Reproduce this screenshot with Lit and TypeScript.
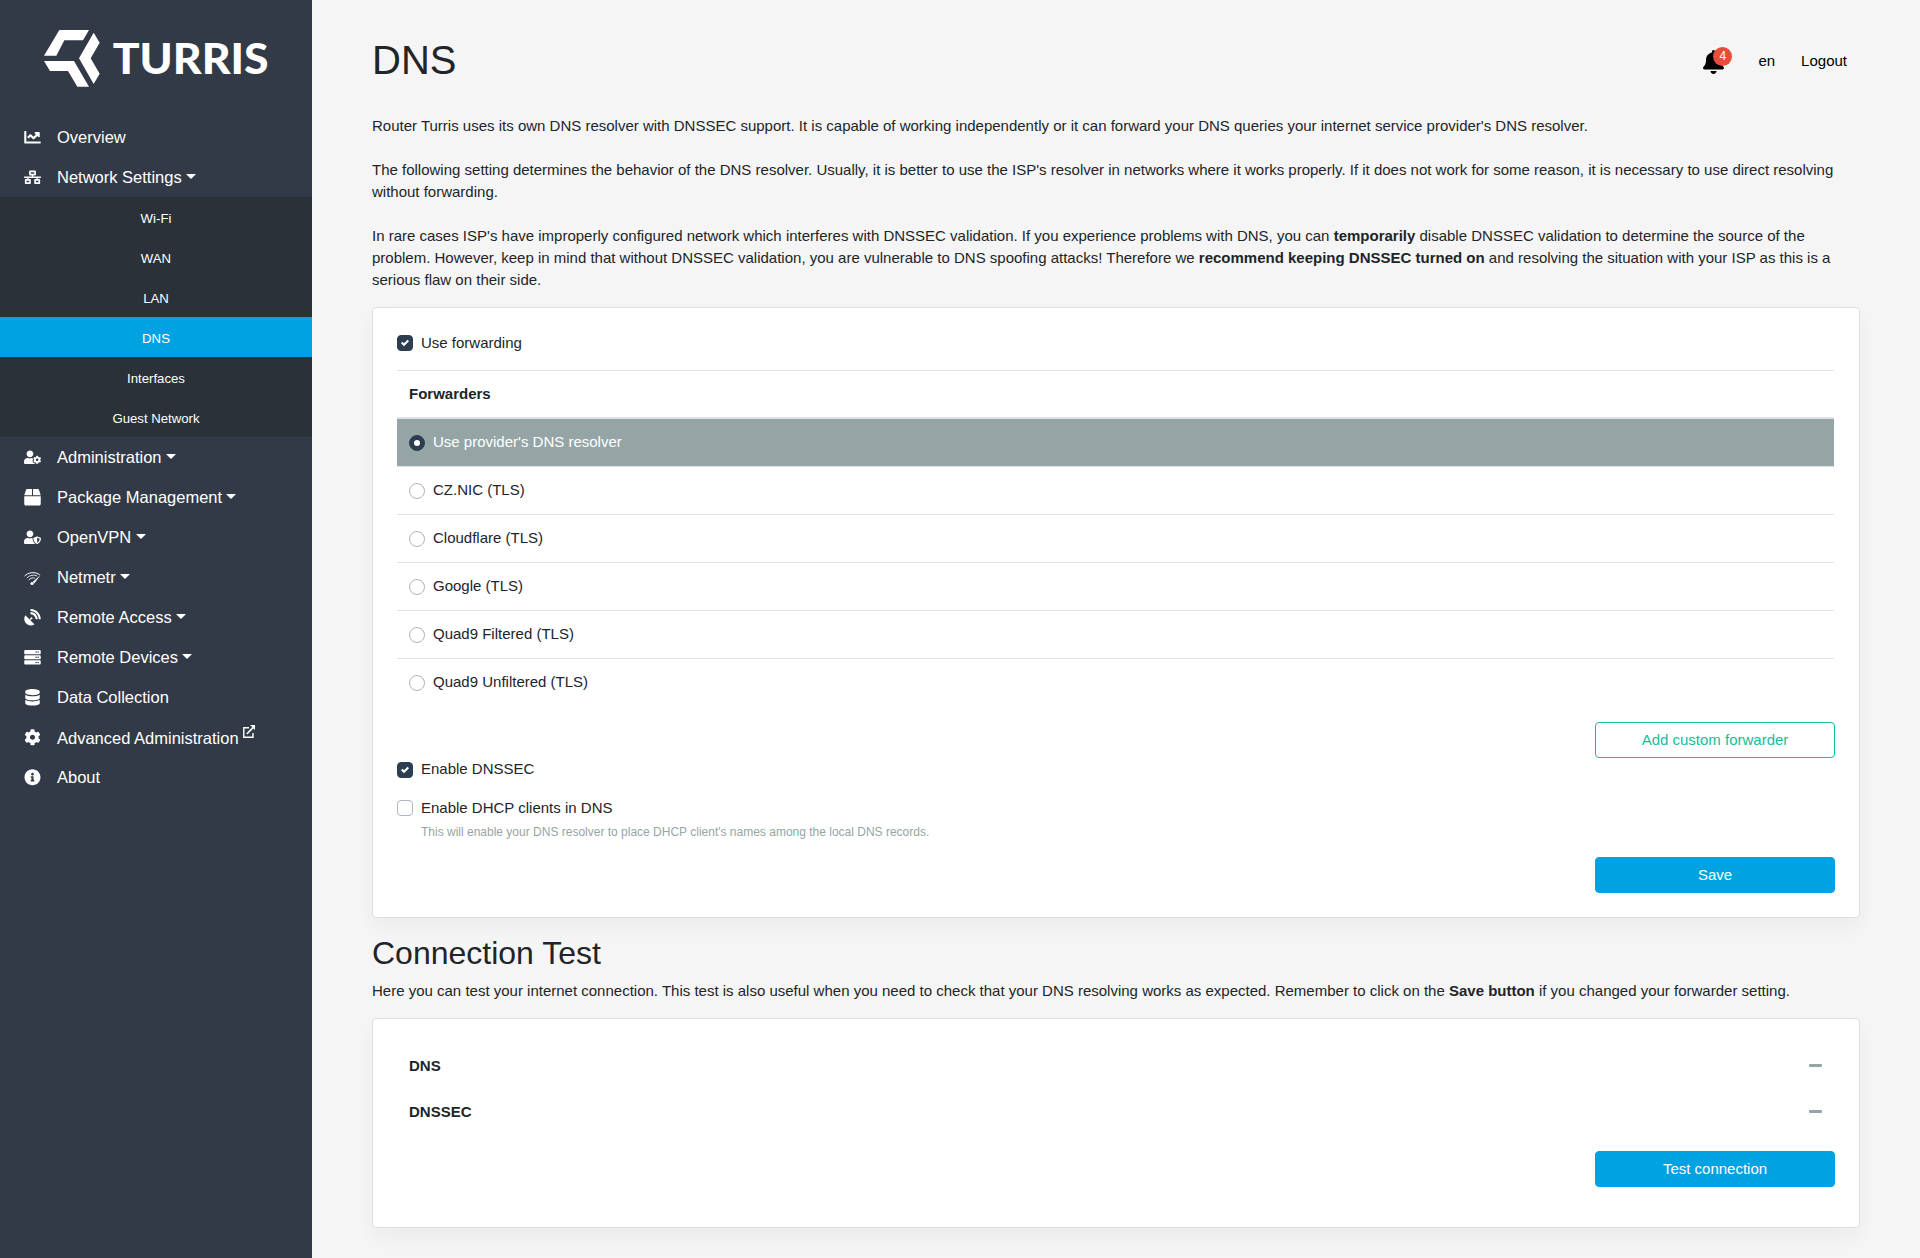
import { LitElement, html, css, svg, nothing } from "lit";
import { customElement, property } from "lit/decorators.js";
import { classMap } from "lit/directives/class-map.js";

type IconDef = { w: number; d: string };

const serverUnit = (y: number) =>
  `M480 ${y + 128}H32c-17.7 0-32-14.3-32-32V${y + 32}c0-17.7 14.3-32 32-32h448c17.7 0 32 14.3 32 32v64c0 17.7-14.3 32-32 32zm-48-88c-13.3 0-24 10.7-24 24s10.7 24 24 24 24-10.7 24-24-10.7-24-24-24zm-64 0c-13.3 0-24 10.7-24 24s10.7 24 24 24 24-10.7 24-24-10.7-24-24-24z`;

const ICONS: Record<string, IconDef> = {
  chart: {
    w: 512,
    d: "M496 384H64V80c0-8.84-7.16-16-16-16H16C7.16 64 0 71.16 0 80v336c0 17.67 14.33 32 32 32h464c8.84 0 16-7.16 16-16v-32c0-8.84-7.16-16-16-16zM464 96H345.94c-21.38 0-32.09 25.85-16.97 40.97l32.4 32.4L288 242.75l-73.37-73.37c-12.5-12.5-32.76-12.5-45.25 0l-68.69 68.69c-6.25 6.25-6.25 16.38 0 22.63l22.62 22.62c6.25 6.25 16.38 6.25 22.63 0L192 237.25l73.37 73.37c12.5 12.5 32.76 12.5 45.25 0l96-96 32.4 32.4c15.12 15.12 40.97 4.41 40.97-16.97V112c.01-8.84-7.15-16-15.99-16z",
  },
  network: {
    w: 640,
    d: "M640 264v-16c0-8.84-7.16-16-16-16H344v-40h72c17.67 0 32-14.33 32-32V32c0-17.67-14.33-32-32-32H224c-17.67 0-32 14.33-32 32v128c0 17.67 14.33 32 32 32h72v40H16c-8.84 0-16 7.16-16 16v16c0 8.84 7.16 16 16 16h104v40H64c-17.67 0-32 14.33-32 32v128c0 17.67 14.33 32 32 32h160c17.67 0 32-14.33 32-32V352c0-17.67-14.33-32-32-32h-56v-40h304v40h-56c-17.67 0-32 14.33-32 32v128c0 17.67 14.33 32 32 32h160c17.67 0 32-14.33 32-32V352c0-17.67-14.33-32-32-32h-56v-40h104c8.84 0 16-7.16 16-16zM256 128V64h128v64H256zm-64 320H96v-64h96v64zm352 0h-96v-64h96v64z",
  },
  userCog: {
    w: 640,
    d: "M610.5 373.3c2.6-14.1 2.6-28.5 0-42.6l25.8-14.9c3-1.7 4.3-5.2 3.3-8.5-6.7-21.6-18.2-41.2-33.2-57.4-2.3-2.5-6-3.1-9-1.4l-25.8 14.9c-10.9-9.3-23.4-16.5-36.9-21.3v-29.8c0-3.4-2.4-6.4-5.7-7.1-22.3-5-45-4.8-66.2 0-3.3.7-5.7 3.7-5.7 7.1v29.8c-13.5 4.8-26 12-36.9 21.3l-25.8-14.9c-2.9-1.7-6.7-1.1-9 1.4-15 16.2-26.5 35.8-33.2 57.4-1 3.3.4 6.8 3.3 8.5l25.8 14.9c-2.6 14.1-2.6 28.5 0 42.6l-25.8 14.9c-3 1.7-4.3 5.2-3.3 8.5 6.7 21.6 18.2 41.1 33.2 57.4 2.3 2.5 6 3.1 9 1.4l25.8-14.9c10.9 9.3 23.4 16.5 36.9 21.3v29.8c0 3.4 2.4 6.4 5.7 7.1 22.3 5 45 4.8 66.2 0 3.3-.7 5.7-3.7 5.7-7.1v-29.8c13.5-4.8 26-12 36.9-21.3l25.8 14.9c2.9 1.7 6.7 1.1 9-1.4 15-16.2 26.5-35.8 33.2-57.4 1-3.3-.4-6.8-3.3-8.5l-25.8-14.9zM496 400.5c-26.8 0-48.5-21.8-48.5-48.5s21.8-48.5 48.5-48.5 48.5 21.8 48.5 48.5-21.7 48.5-48.5 48.5zM224 256c70.7 0 128-57.3 128-128S294.7 0 224 0 96 57.3 96 128s57.3 128 128 128zm201.2 226.5c-2.3-1.2-4.6-2.6-6.8-3.9l-7.9 4.6c-6 3.4-12.8 5.3-19.6 5.3-10.9 0-21.4-4.6-28.9-12.6-18.3-19.8-32.3-43.9-40.2-69.6-5.5-17.7 1.9-36.4 17.9-45.7l7.9-4.6c-.1-2.6-.1-5.2 0-7.8l-7.9-4.6c-16-9.2-23.4-28-17.9-45.7.9-2.9 2.2-5.8 3.2-8.7-3.8-.3-7.5-1.2-11.4-1.2h-16.7c-22.2 10.2-46.9 16-72.9 16s-50.6-5.8-72.9-16h-16.7C60.2 288 0 348.2 0 422.4V464c0 26.5 21.5 48 48 48h352c10.1 0 19.5-3.2 27.2-8.5-1.2-3.8-2-7.7-2-11.8v-9.2z",
  },
  box: {
    w: 512,
    d: "M509.5 184.6L458.9 32.8C452.4 13.2 434.1 0 413.4 0H272v192h238.7c-.4-2.5-.4-5-1.2-7.4zM240 0H98.6c-20.7 0-39 13.2-45.5 32.8L2.5 184.6c-.8 2.4-.8 4.9-1.2 7.4H240V0zM0 224v240c0 26.5 21.5 48 48 48h416c26.5 0 48-21.5 48-48V224H0z",
  },
  userShield: {
    w: 640,
    d: "M622.3 271.1l-115.2-45c-4.1-1.6-12.6-3.7-22.2 0l-115.2 45c-10.7 4.2-17.7 14-17.7 24.9 0 111.6 68.7 188.8 132.9 213.9 9.6 3.7 18 1.6 22.2 0C558.4 489.9 640 420.5 640 296c0-10.9-7-20.7-17.7-24.9zM496 462.4V273.3l95.5 37.3c-5.6 87.1-60.9 135.4-95.5 151.8zM224 256c70.7 0 128-57.3 128-128S294.7 0 224 0 96 57.3 96 128s57.3 128 128 128zm96 40c0-2.5.8-4.8 1.1-7.2-2.5-.1-4.9-.8-7.5-.8h-16.7c-22.2 10.2-46.9 16-72.9 16s-50.6-5.8-72.9-16h-16.7C60.2 288 0 348.2 0 422.4V464c0 26.5 21.5 48 48 48h352c6.8 0 13.3-1.5 19.2-4-54-42.9-99.2-116.7-99.2-212z",
  },
  dish: {
    w: 512,
    d: "M305.45 462.59c7.39 7.3 6.19 20.1-3 25-77.71 41.8-176.73 29.91-242.34-35.71C-5.5 386.28-17.4 287.36 24.41 209.55c4.89-9.09 17.69-10.3 25-3l116.82 116.82 27.39-27.4c-.69-2.61-1.59-5-1.59-7.81a32 32 0 1 1 32 32c-2.8 0-5.2-.89-7.8-1.59l-27.41 27.41ZM511.98 303.07a16.1 16.1 0 0 1-16 17H463.86a15.97 15.97 0 0 1-15.89-15C440.47 175.55 336.45 70.53 207.03 63.53a15.84 15.84 0 0 1-15-15.91V16.03A16.09 16.09 0 0 1 209.03.02C372.25 8.62 503.47 139.84 511.98 303.07Zm-96.01-.3a16.21 16.21 0 0 1-16.11 17.3H367.65a16.07 16.07 0 0 1-15.9-14.7c-6.9-77.01-68.11-138.91-144.92-145.23a15.94 15.94 0 0 1-14.8-15.89V112.13a16.13 16.13 0 0 1 17.3-16.09C319.45 104.54 407.56 192.65 415.96 302.77Z",
  },
  server: { w: 512, d: serverUnit(32) + serverUnit(192) + serverUnit(352) },
  database: {
    w: 448,
    d: "M448 73.143v45.714C448 159.143 347.667 192 224 192S0 159.143 0 118.857V73.143C0 32.857 100.333 0 224 0s224 32.857 224 73.143zM448 176v102.857C448 319.143 347.667 352 224 352S0 319.143 0 278.857V176c48.125 33.143 136.208 48.572 224 48.572S399.874 209.143 448 176zm0 160v102.857C448 479.143 347.667 512 224 512S0 479.143 0 438.857V336c48.125 33.143 136.208 48.572 224 48.572S399.874 369.143 448 336z",
  },
  cog: {
    w: 512,
    d: "M487.4 315.7l-42.6-24.6c4.3-23.2 4.3-47 0-70.2l42.6-24.6c4.9-2.8 7.1-8.6 5.5-14-11.1-35.6-30-67.8-54.7-94.6-3.8-4.1-10-5.1-14.8-2.3L380.8 110c-17.9-15.4-38.5-27.3-60.8-35.1V25.8c0-5.6-3.9-10.5-9.4-11.7-36.7-8.2-74.3-7.8-109.2 0-5.5 1.2-9.4 6.1-9.4 11.7V75c-22.2 7.9-42.8 19.8-60.8 35.1L88.7 85.5c-4.9-2.8-11-1.9-14.8 2.3-24.7 26.7-43.6 58.9-54.7 94.6-1.7 5.4.6 11.2 5.5 14L67.3 221c-4.3 23.2-4.3 47 0 70.2l-42.6 24.6c-4.9 2.8-7.1 8.6-5.5 14 11.1 35.6 30 67.8 54.7 94.6 3.8 4.1 10 5.1 14.8 2.3l42.6-24.6c17.9 15.4 38.5 27.3 60.8 35.1v49.2c0 5.6 3.9 10.5 9.4 11.7 36.7 8.2 74.3 7.8 109.2 0 5.5-1.2 9.4-6.1 9.4-11.7v-49.2c22.2-7.9 42.8-19.8 60.8-35.1l42.6 24.6c4.9 2.8 11 1.9 14.8-2.3 24.7-26.7 43.6-58.9 54.7-94.6 1.5-5.5-.7-11.3-5.6-14.1zM256 336c-44.1 0-80-35.9-80-80s35.9-80 80-80 80 35.9 80 80-35.9 80-80 80z",
  },
  info: {
    w: 512,
    d: "M256 8C119.043 8 8 119.083 8 256c0 136.997 111.043 248 248 248s248-111.003 248-248C504 119.083 392.957 8 256 8zm0 110c23.196 0 42 18.804 42 42s-18.804 42-42 42-42-18.804-42-42 18.804-42 42-42zm56 254c0 6.627-5.373 12-12 12h-88c-6.627 0-12-5.373-12-12v-24c0-6.627 5.373-12 12-12h12v-64h-12c-6.627 0-12-5.373-12-12v-24c0-6.627 5.373-12 12-12h64c6.627 0 12 5.373 12 12v100h12c6.627 0 12 5.373 12 12v24z",
  },
  bell: {
    w: 448,
    d: "M224 512c35.32 0 63.97-28.65 63.97-64H160.03c0 35.35 28.65 64 63.97 64zm215.39-149.71c-19.32-20.76-55.47-51.99-55.47-154.29 0-77.7-54.48-139.9-127.94-155.16V32c0-17.67-14.32-32-31.98-32s-31.98 14.33-31.98 32v20.84C118.56 68.1 64.08 130.3 64.08 208c0 102.3-36.15 133.53-55.47 154.29-6 6.45-8.66 14.16-8.61 21.71.11 16.4 12.98 32 32.1 32h383.8c19.12 0 32-15.6 32.1-32 .05-7.55-2.61-15.27-8.61-21.71z",
  },
};

@customElement("fa-icon")
class FaIcon extends LitElement {
  static styles = css`
    :host {
      display: block;
      width: 1em;
      height: 1em;
      flex: none;
    }
    .glyph {
      display: block;
      width: 100%;
      height: 100%;
      overflow: visible;
    }
  `;

  @property() name = "";

  render() {
    if (this.name === "netmetr") {
      return html`<svg class="glyph" viewBox="0 0 51 51" fill="none" stroke="currentColor">
        ${svg`<path d="M1 22C13 9 34 8 48 18" stroke-width="3"/>
        <path d="M8 28C17 18 31 17 40 22" stroke-width="2.6"/>
        <path d="M14 34C20 27 28 26 33 29" stroke-width="2.6"/>
        <path d="M51 18L31 45L26 40Z" fill="currentColor" stroke="none"/>
        <circle cx="24" cy="45" r="4.8" fill="currentColor" stroke="none"/>`}
      </svg>`;
    }
    const icon = ICONS[this.name];
    if (!icon) return nothing;
    return html`<svg class="glyph" viewBox="0 0 ${icon.w} 512" fill="currentColor">
      ${svg`<path d=${icon.d} />`}
    </svg>`;
  }
}

type NavItem = {
  icon: string;
  label: string;
  caret?: boolean;
  external?: boolean;
  children?: string[];
};

const NAV: NavItem[] = [
  { icon: "chart", label: "Overview" },
  {
    icon: "network",
    label: "Network Settings",
    caret: true,
    children: ["Wi-Fi", "WAN", "LAN", "DNS", "Interfaces", "Guest Network"],
  },
  { icon: "userCog", label: "Administration", caret: true },
  { icon: "box", label: "Package Management", caret: true },
  { icon: "userShield", label: "OpenVPN", caret: true },
  { icon: "netmetr", label: "Netmetr", caret: true },
  { icon: "dish", label: "Remote Access", caret: true },
  { icon: "server", label: "Remote Devices", caret: true },
  { icon: "database", label: "Data Collection" },
  { icon: "cog", label: "Advanced Administration", external: true },
  { icon: "info", label: "About" },
];

@customElement("side-nav")
class SideNav extends LitElement {
  static styles = css`
    :host {
      display: block;
      width: 312px;
      flex: none;
      background: #333a47;
      color: #fff;
      font-size: 16.5px;
    }
    .logo {
      display: block;
      width: 312px;
      height: 117px;
    }
    .brand {
      font-family: Lato, sans-serif;
      font-weight: 900;
      font-size: 127px;
    }
    .item {
      display: flex;
      align-items: center;
      height: 40px;
      padding-left: 24px;
      gap: 16px;
    }
    .item fa-icon {
      width: 17px;
      height: 16.5px;
    }
    .label {
      line-height: 24px;
      white-space: nowrap;
    }
    .caret::after {
      content: "";
      display: inline-block;
      margin-left: 0.255em;
      vertical-align: 0.255em;
      border-top: 5px solid;
      border-right: 5px solid transparent;
      border-left: 5px solid transparent;
    }
    .external {
      width: 12px;
      height: 13px;
      margin-left: 4px;
      vertical-align: 6px;
    }
    .sub {
      background: #2a3139;
      font-size: 13.2px;
    }
    .subitem {
      display: flex;
      align-items: center;
      justify-content: center;
      height: 40px;
      padding-top: 3px;
      box-sizing: border-box;
    }
    .active {
      background: #00a2e2;
    }
  `;

  render() {
    return html`
      <svg class="logo" viewBox="0 0 936 351" fill="#fff">
        ${svg`<path d="M178 90H267L249 121H193L169 167H132Z"/>
        <path d="M281 98L299 128L272 175L299 221L281 252L237 175Z"/>
        <path d="M132 183H222L267 260H232L204 213H150Z"/>
        <text class="brand" x="338" y="221" textLength="468" lengthAdjust="spacingAndGlyphs">TURRIS</text>`}
      </svg>
      <nav>
        ${NAV.map(
          (n) => html`
            <div class="item">
              <fa-icon name=${n.icon}></fa-icon>
              <span class=${classMap({ label: true, caret: !!n.caret })}>${n.label}${n.external
                ? html`<svg class="external" viewBox="0 0 12 13" fill="none" stroke="#fff" stroke-width="1.4">
                    ${svg`<path d="M6 2.7H.8V12.2H10V8"/><path d="M3.8 9L10 2.7" stroke-width="1.7"/><path d="M7 0H12V5Z" fill="#fff" stroke="none"/>`}
                  </svg>`
                : nothing}</span>
            </div>
            ${n.children
              ? html`<div class="sub">
                  ${n.children.map(
                    (c) => html`<div class=${classMap({ subitem: true, active: c === "DNS" })}>${c}</div>`
                  )}
                </div>`
              : nothing}
          `
        )}
      </nav>
    `;
  }
}

const FORWARDERS = [
  "Use provider's DNS resolver",
  "CZ.NIC (TLS)",
  "Cloudflare (TLS)",
  "Google (TLS)",
  "Quad9 Filtered (TLS)",
  "Quad9 Unfiltered (TLS)",
];

@customElement("app-root")
class AppRoot extends LitElement {
  static styles = css`
    :host {
      display: flex;
      min-height: 1258px;
      background: #f5f5f5;
      color: #212529;
      font-family: "Liberation Sans", Arial, sans-serif;
      font-size: 15px;
      line-height: 22px;
    }
    .main {
      flex: 1;
      box-sizing: border-box;
      padding: 36px 60px 0;
    }
    .top {
      display: flex;
      align-items: center;
      justify-content: space-between;
      height: 48px;
      margin-bottom: 31px;
    }
    h1,
    h2 {
      margin: 0;
      font-weight: 500;
      line-height: 1.2;
    }
    h1 {
      font-size: 40px;
    }
    h2 {
      font-size: 32px;
      margin: 16px 0 8px;
    }
    p {
      margin: 0 0 16px;
    }
    .tools {
      display: flex;
      align-items: center;
      gap: 26px;
      padding: 2px 13px 0 0;
      color: #000;
    }
    .bell {
      position: relative;
      width: 29px;
    }
    .bell fa-icon {
      width: 21px;
      height: 24px;
      margin-top: 2px;
    }
    .badge {
      position: absolute;
      left: 10px;
      top: -1px;
      width: 19px;
      height: 19px;
      border-radius: 50%;
      background: #e74c3c;
      color: #fff;
      font-size: 12px;
      line-height: 19px;
      text-align: center;
    }
    .card {
      box-sizing: border-box;
      padding: 24px;
      background: #fff;
      border: 1px solid #dfdfdf;
      border-radius: 4px;
      box-shadow: 0 10px 20px rgba(0, 0, 0, 0.04);
    }
    .settings {
      height: 611px;
    }
    .test {
      height: 210px;
    }
    .option {
      display: flex;
      gap: 8px;
      height: 22px;
    }
    .mark {
      box-sizing: border-box;
      flex: none;
      width: 16px;
      height: 16px;
      margin-top: 3px;
      border: 1px solid #adb5bd;
      border-radius: 4px;
      background: #fff;
      display: flex;
      align-items: center;
      justify-content: center;
    }
    .radio {
      border-radius: 50%;
      margin-top: 4px;
    }
    .on {
      background: #2c3e50;
      border-color: #2c3e50;
    }
    .dot {
      width: 6px;
      height: 6px;
      border-radius: 50%;
      background: #fff;
    }
    .check {
      width: 8px;
      height: 8px;
    }
    .head {
      box-sizing: border-box;
      height: 49px;
      margin-top: 16px;
      padding: 12px;
      border-top: 1px solid #dee2e6;
      border-bottom: 2px solid #dee2e6;
      font-weight: 700;
    }
    .row {
      box-sizing: border-box;
      height: 48px;
      padding: 12px;
      border-top: 1px solid #dee2e6;
    }
    .row.selected {
      height: 47px;
      padding-top: 12px;
      border-top: 0;
      background: #95a5a6;
      color: #fff;
    }
    .head,
    .row {
      margin-right: 1px;
    }
    .btnline {
      display: flex;
      justify-content: flex-end;
    }
    .btn {
      box-sizing: border-box;
      width: 240px;
      height: 36px;
      border: 1px solid #00a2e2;
      border-radius: 4px;
      background: #00a2e2;
      color: #fff;
      text-align: center;
      line-height: 34px;
    }
    .outline {
      background: #fff;
      border-color: #18bc9c;
      color: #18bc9c;
    }
    .add {
      margin-top: 16px;
    }
    .dnssec {
      margin-bottom: 17px;
    }
    .dnssec .mark {
      margin-top: 4px;
    }
    .dhcp .mark {
      margin-top: 3px;
    }
    .help {
      margin: 4px 0 16px 24px;
      height: 18px;
      font-size: 12px;
      line-height: 18px;
      color: #95a5a6;
    }
    .result {
      display: flex;
      justify-content: space-between;
      align-items: center;
      height: 46px;
      padding: 0 13px 0 12px;
      font-weight: 700;
    }
    .dash {
      width: 13px;
      height: 3px;
      border-radius: 1px;
      background: #95a5a6;
      margin-bottom: 1px;
    }
    .run {
      margin-top: 16px;
    }
  `;

  private checkbox(label: string, on: boolean, extra: string) {
    return html`<div class="option ${extra}">
      <span class=${classMap({ mark: true, on })}>
        ${on
          ? html`<svg class="check" viewBox="0 0 8 8" fill="#fff">
              ${svg`<path d="M6.564.75l-3.59 3.612-1.538-1.55L0 4.26 2.974 7.25 8 2.193z"/>`}
            </svg>`
          : nothing}
      </span>
      <span>${label}</span>
    </div>`;
  }

  render() {
    return html`
      <side-nav></side-nav>
      <main class="main">
        <header class="top">
          <h1>DNS</h1>
          <div class="tools">
            <div class="bell"><fa-icon name="bell"></fa-icon><span class="badge">4</span></div>
            <span>en</span>
            <span>Logout</span>
          </div>
        </header>
        <p>
          Router Turris uses its own DNS resolver with DNSSEC support. It is capable of working independently or it can
          forward your DNS queries your internet service provider's DNS resolver.<br /><br />
          The following setting determines the behavior of the DNS resolver. Usually, it is better to use the ISP's
          resolver in networks where it works properly. If it does not work for some reason, it is necessary to use
          direct resolving without forwarding.<br /><br />
          In rare cases ISP's have improperly configured network which interferes with DNSSEC validation. If you
          experience problems with DNS, you can <b>temporarily</b> disable DNSSEC validation to determine the source of
          the problem. However, keep in mind that without DNSSEC validation, you are vulnerable to DNS spoofing
          attacks! Therefore we <b>recommend keeping DNSSEC turned on</b> and resolving the situation with your ISP as
          this is a serious flaw on their side.
        </p>
        <section class="card settings">
          ${this.checkbox("Use forwarding", true, "")}
          <div class="head">Forwarders</div>
          ${FORWARDERS.map(
            (f, i) => html`<div class=${classMap({ row: true, selected: i === 0 })}>
              <div class="option">
                <span class=${classMap({ mark: true, radio: true, on: i === 0 })}>
                  ${i === 0 ? html`<span class="dot"></span>` : nothing}
                </span>
                <span>${f}</span>
              </div>
            </div>`
          )}
          <div class="btnline add"><div class="btn outline">Add custom forwarder</div></div>
          ${this.checkbox("Enable DNSSEC", true, "dnssec")} ${this.checkbox("Enable DHCP clients in DNS", false, "dhcp")}
          <div class="help">
            This will enable your DNS resolver to place DHCP client's names among the local DNS records.
          </div>
          <div class="btnline"><div class="btn">Save</div></div>
        </section>
        <h2>Connection Test</h2>
        <p>
          Here you can test your internet connection. This test is also useful when you need to check that your DNS
          resolving works as expected. Remember to click on the <b>Save button</b> if you changed your forwarder
          setting.
        </p>
        <section class="card test">
          <div class="result"><span>DNS</span><span class="dash"></span></div>
          <div class="result"><span>DNSSEC</span><span class="dash"></span></div>
          <div class="btnline run"><div class="btn">Test connection</div></div>
        </section>
      </main>
    `;
  }
}
